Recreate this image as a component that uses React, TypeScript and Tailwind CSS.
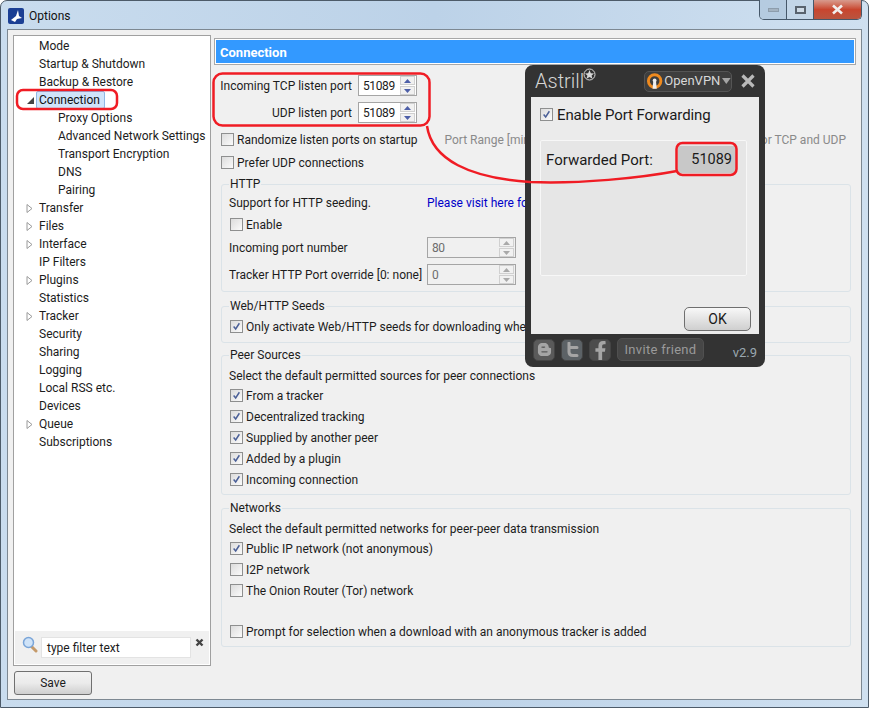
import React from "react";
import { FaBloggerB, FaFacebookF } from "react-icons/fa";

const tree = [
  { label: "Mode" },
  { label: "Startup & Shutdown" },
  { label: "Backup & Restore" },
  { label: "Connection", open: true, selected: true },
  { label: "Proxy Options", child: true },
  { label: "Advanced Network Settings", child: true },
  { label: "Transport Encryption", child: true },
  { label: "DNS", child: true },
  { label: "Pairing", child: true },
  { label: "Transfer", closed: true },
  { label: "Files", closed: true },
  { label: "Interface", closed: true },
  { label: "IP Filters" },
  { label: "Plugins", closed: true },
  { label: "Statistics" },
  { label: "Tracker", closed: true },
  { label: "Security" },
  { label: "Sharing" },
  { label: "Logging" },
  { label: "Local RSS etc." },
  { label: "Devices" },
  { label: "Queue", closed: true },
  { label: "Subscriptions" },
];

function Check({ on }: { on?: boolean }) {
  return (
    <span className="w-[13px] h-[13px] shrink-0 border border-[#8e8f8f] bg-gradient-to-br from-[#dcdcdc] to-[#fbfbfb] p-px flex items-center justify-center">
      {on && (
        <svg width="11" height="11" viewBox="0 0 11 11">
          <path d="M2 5.5 L4.5 8.5 L9 1.5" fill="none" stroke="#4a5f97" strokeWidth="1.8" />
        </svg>
      )}
    </span>
  );
}

function CheckRow({ label, on, className }: { label: string; on?: boolean; className?: string }) {
  return (
    <div className={"h-[21px] flex items-center gap-[3px] whitespace-nowrap " + (className ?? "")}>
      <Check on={on} />
      <span>{label}</span>
    </div>
  );
}

function Spinner({ value, disabled, width }: { value: string; disabled?: boolean; width: string }) {
  const arrow = disabled ? "#a9a9a9" : "#4d5fa8";
  return (
    <div className={"h-[21px] border border-[#a5a5a5] flex items-center " + width + (disabled ? " bg-[#f0f0f0] text-[#6d6d6d]" : " bg-white")}>
      <span className="flex-1 pl-[4px] tracking-[-0.4px]">{value}</span>
      <div className="w-[15px] h-[19px] mr-px flex flex-col gap-px">
        {[0, 1].map((i) => (
          <span key={i} className="flex-1 border border-[#d0d0d0] bg-[#f1f1f1] flex items-center justify-center">
            <svg width="7" height="4" viewBox="0 0 7 4">
              <path d={i === 0 ? "M3.5 0 L7 4 L0 4 Z" : "M0 0 L7 0 L3.5 4 Z"} fill={arrow} />
            </svg>
          </span>
        ))}
      </div>
    </div>
  );
}

function Group({ title, className, children }: { title: string; className?: string; children: React.ReactNode }) {
  return (
    <fieldset className={"border border-[#dbe3e8] rounded-[3px] pl-[7px] ml-[7px] mr-[5px] " + (className ?? "")}>
      <legend className="px-px h-[16px] leading-[17px]">{title}</legend>
      {children}
    </fieldset>
  );
}

function Astrill() {
  return (
    <div className="absolute left-[525px] top-[65px] w-[240px] h-[302px] bg-[#333333] rounded-[8px] flex flex-col px-[6px]">
      <div className="h-[32px] flex items-center shrink-0">
        <span className="w-[52px] text-[20px] text-[#d5d5d5] pl-[4px] font-light">Astrill</span>
        <svg className="mb-[14px]" width="13" height="13" viewBox="0 0 13 13">
          <circle cx="6.5" cy="6.5" r="5.5" fill="none" stroke="#d8d8d8" />
          <path d="M6.5 2 L7.8 5.2 L11 5.5 L8.6 7.6 L9.4 10.8 L6.5 9.1 L3.6 10.8 L4.4 7.6 L2 5.5 L5.2 5.2 Z" fill="#d8d8d8" />
        </svg>
        <div className="ml-[48px] w-[88px] h-[21px] border border-[#555555] rounded-[5px] bg-[#3e3e3e] flex items-center pl-px gap-px text-[#d8d8d8] text-[13px]">
          <svg width="18" height="18" viewBox="0 0 18 18">
            <circle cx="9" cy="9" r="6.5" fill="none" stroke="#ef8a1e" strokeWidth="3" />
            <path d="M7.5 10 L6.8 17 L11.2 17 L10.5 10 Z" fill="#eeeeee" />
            <circle cx="9" cy="8.5" r="2" fill="#eeeeee" />
          </svg>
          <span>OpenVPN</span>
          <svg width="9" height="6" viewBox="0 0 9 6" className="ml-px">
            <path d="M0 0 L9 0 L4.5 6 Z" fill="#a5a5a5" />
          </svg>
        </div>
        <svg className="ml-[9px]" width="14" height="14" viewBox="0 0 14 14">
          <path d="M1.5 1.5 L12.5 12.5 M12.5 1.5 L1.5 12.5" stroke="#b9b9b9" strokeWidth="3.2" />
        </svg>
      </div>
      <div className="h-[237px] shrink-0 bg-[#ebebeb] px-[9px] flex flex-col text-[#1a1a1a]">
        <div className="mt-[11px] h-[13px] flex items-center gap-[4px] text-[15px]">
          <Check on />
          <span className="pt-[2px] tracking-[-0.1px]">Enable Port Forwarding</span>
        </div>
        <div className="mt-[19px] w-[207px] h-[136px] border border-[#f7f7f7] bg-[#e6e6e6] rounded-[2px] pl-[5px] pr-[10px] pt-[5px] flex justify-between">
          <span className="leading-[28px] text-[15px]">Forwarded Port:</span>
          <span className="w-[58px] h-[27px] bg-[#c8c8c8] text-right leading-[27px] pr-[4px] text-[14.5px]">51089</span>
        </div>
        <button className="mt-[31px] self-end -mr-[1px] w-[67px] h-[24px] border border-[#6f6f6f] rounded-[5px] bg-gradient-to-b from-[#f8f8f8] to-[#cfcfcf] text-[14px]">OK</button>
      </div>
      <div className="flex-1 flex items-center gap-[6px] pl-[2px] pb-[2px] text-[#8a8a8a]">
        <span className="w-[22px] h-[22px] rounded-[5px] bg-[#5a5a5a] border border-[#444444] flex items-center justify-center">
          <FaBloggerB size={15} color="#a5a5a5" />
        </span>
        <span className="w-[22px] h-[22px] rounded-[5px] bg-[#5c6266] border border-[#444444] flex items-center justify-center">
          <svg width="14" height="16" viewBox="0 0 14 16">
            <path d="M4 1 L4 10 Q4 13.5 8 13.5 L12 13.5 M4 5.5 L12 5.5" fill="none" stroke="#a5a5a5" strokeWidth="3" strokeLinecap="round" />
          </svg>
        </span>
        <span className="w-[22px] h-[22px] rounded-[5px] bg-[#4d4d4d] border border-[#444444] flex items-end justify-center overflow-hidden">
          <FaFacebookF size={19} color="#a5a5a5" />
        </span>
        <span className="w-[87px] h-[23px] rounded-[5px] bg-[#464646] border border-[#505050] flex items-center justify-center text-[13px] text-[#9a9a9a] tracking-[0.3px]">Invite friend</span>
        <span className="ml-auto pt-[6px] pr-[2px] text-[13px] text-[#9aa7b0]">v2.9</span>
      </div>
    </div>
  );
}

export default function App() {
  return (
    <div className="relative w-[869px] h-[708px] overflow-hidden bg-white text-[12px] text-[#1c1c1c] font-['Roboto',sans-serif]">
      <div className="h-full rounded-t-[7px] border border-[#4d5b69] bg-gradient-to-r from-[#c9dcee] via-[#bcd2e8] to-[#cfe0f0] flex flex-col px-[6px] pb-[7px]">
        {/* Title bar */}
        <div className="h-[28px] shrink-0 flex items-start">
          <svg className="mt-[7px] ml-px" width="16" height="16" viewBox="0 0 16 16">
            <rect width="16" height="16" rx="2" fill="#1b3f94" />
            <path d="M3 12 L8 8 L10 2 L11 8 L14 10 L9 11 L7 14 Z" fill="#ffffff" />
          </svg>
          <span className="ml-[5px] mt-[6px] text-[#111111] text-[12px]">Options</span>
          <div className="ml-auto -mt-px h-[20px] w-[103px] flex border border-t-0 border-[#46586a] rounded-b-[5px] overflow-hidden">
            <span className="w-[27px] border-r border-[#46586a] bg-[#b5cbe0] flex items-center justify-center">
              <span className="w-[11px] h-[4px] bg-[#a4b3c1] border border-[#8d9dac]" />
            </span>
            <span className="w-[27px] border-r border-[#46586a] bg-[#c3d6e8] flex items-center justify-center">
              <span className="w-[11px] h-[8px] border-2 border-[#59636e] bg-[#cfdbe6]" />
            </span>
            <span className="flex-1 bg-gradient-to-b from-[#d79a8d] via-[#c8452e] to-[#b9543f] flex items-center justify-center">
              <svg width="13" height="11" viewBox="0 0 13 11">
                <path d="M2 1.5 L11 9.5 M11 1.5 L2 9.5" stroke="#f1eeee" strokeWidth="2.6" />
              </svg>
            </span>
          </div>
        </div>

        {/* Client area */}
        <div className="flex-1 bg-[#f0f0f0] border border-[#7d8892] p-[5px] pb-0 flex flex-col">
          <div className="flex gap-[3px] h-[631px]">
            {/* Left tree */}
            <div className="w-[198px] shrink-0 border border-[#a0a0a0] bg-white flex flex-col">
              <div className="flex-1 pt-px">
                {tree.map((t) => (
                  <div key={t.label} className={"h-[18px] flex items-center whitespace-nowrap " + (t.child ? "pl-[44px]" : "pl-[25px]")}>
                    {t.open && (
                      <svg className="absolute left-[27px]" width="7" height="7" viewBox="0 0 7 7">
                        <path d="M7 0 L7 7 L0 7 Z" fill="#444444" />
                      </svg>
                    )}
                    {t.closed && (
                      <svg className="absolute left-[26px]" width="7" height="9" viewBox="0 0 7 9">
                        <path d="M1 .5 L6 4.5 L1 8.5 Z" fill="#ffffff" stroke="#9a9a9a" />
                      </svg>
                    )}
                    <span className={t.selected ? "bg-[#cfe4fa] border border-[#8eb8e6] rounded-[2px] h-[18px] leading-[16px] pl-[2px] pr-[4px] -ml-[3px] text-[#111111]" : ""}>{t.label}</span>
                  </div>
                ))}
              </div>
              <div className="h-[33px] bg-[#f0f0f0] flex items-start pl-[7px] pt-[6px] mx-px mb-px">
                <svg width="16" height="17" viewBox="0 0 16 17" className="-mt-[1px]">
                  <line x1="9.5" y1="10.5" x2="14" y2="15" stroke="#c59a6a" strokeWidth="3" strokeLinecap="round" />
                  <circle cx="6.5" cy="6.5" r="5" fill="#cfe3f8" stroke="#7aa5d8" strokeWidth="1.5" />
                </svg>
                <span className="ml-[3px] w-[150px] h-[21px] bg-white border border-[#e3e3e3] leading-[21px] pl-[5px]">type filter text</span>
                <svg className="ml-[4px] mt-[1px]" width="9" height="9" viewBox="0 0 9 9">
                  <path d="M1.5 1.5 L7.5 7.5 M7.5 1.5 L1.5 7.5" stroke="#444444" strokeWidth="2.4" />
                </svg>
              </div>
            </div>

            {/* Right page */}
            <div className="flex-1 flex flex-col">
              <div className="h-[27px] mt-[3px] border border-[#a8a8a8] bg-white p-px">
                <div className="h-full bg-[#3399ff] text-white font-bold text-[13px] leading-[25px] pl-[4px]">Connection</div>
              </div>

              <div className="mt-[10px] flex items-center whitespace-nowrap">
                <span className="w-[138px] text-right">Incoming TCP listen port</span>
                <Spinner value="51089" width="w-[59px] ml-[6px]" />
              </div>
              <div className="mt-[6px] flex items-center">
                <span className="w-[138px] text-right">UDP listen port</span>
                <Spinner value="51089" width="w-[59px] ml-[6px]" />
              </div>

              <div className="mt-[6px] flex items-center h-[21px] pl-[7px] whitespace-nowrap">
                <CheckRow label="Randomize listen ports on startup" />
                <span className="ml-[27px] text-[#8a8a8a]">Port Range [min</span>
                <span className="ml-auto mr-[10px] text-[#8a8a8a]">or TCP and UDP</span>
              </div>
              <div className="mt-[2px] pl-[7px]">
                <CheckRow label="Prefer UDP connections" />
              </div>

              <Group title="HTTP" className="mt-[3px] h-[116px]">
                <div className="flex h-[20px] items-center mt-px whitespace-nowrap">
                  <span className="w-[198px]">Support for HTTP seeding.</span>
                  <span className="text-[#0000c8]">Please visit here for more info</span>
                </div>
                <CheckRow label="Enable" className="mt-[1px] pl-px" />
                <div className="mt-[2px] h-[21px] flex items-center whitespace-nowrap">
                  <span className="w-[198px]">Incoming port number</span>
                  <Spinner value="80" disabled width="w-[89px]" />
                </div>
                <div className="mt-[6px] h-[21px] flex items-center whitespace-nowrap">
                  <span className="w-[198px]">Tracker HTTP Port override [0: none]</span>
                  <Spinner value="0" disabled width="w-[89px]" />
                </div>
              </Group>

              <Group title="Web/HTTP Seeds" className="mt-[6px] h-[45px]">
                <CheckRow label="Only activate Web/HTTP seeds for downloading when needed" on className="mt-[2px] pl-px" />
              </Group>

              <Group title="Peer Sources" className="mt-[4px] h-[148px]">
                <div className="h-[19px] mt-[3px] flex items-center">Select the default permitted sources for peer connections</div>
                <CheckRow label="From a tracker" on className="pl-px" />
                <CheckRow label="Decentralized tracking" on className="pl-px" />
                <CheckRow label="Supplied by another peer" on className="pl-px" />
                <CheckRow label="Added by a plugin" on className="pl-px" />
                <CheckRow label="Incoming connection" on className="pl-px" />
              </Group>

              <Group title="Networks" className="mt-[5px] h-[147px]">
                <div className="h-[19px] mt-[3px] flex items-center">Select the default permitted networks for peer-peer data transmission</div>
                <CheckRow label="Public IP network (not anonymous)" on className="pl-px" />
                <CheckRow label="I2P network" className="pl-px" />
                <CheckRow label="The Onion Router (Tor) network" className="pl-px" />
                <CheckRow label="Prompt for selection when a download with an anonymous tracker is added" className="mt-[20px] pl-px" />
              </Group>
            </div>
          </div>
          <button className="mt-[5px] ml-px w-[78px] h-[24px] border border-[#707070] rounded-[3px] bg-gradient-to-b from-[#f2f2f2] via-[#ebebeb] to-[#cfcfcf] text-[12px]">Save</button>
        </div>
      </div>

      <Astrill />

      {/* Red annotations drawn on the screenshot */}
      <svg className="absolute inset-0 pointer-events-none" width="869" height="708" viewBox="0 0 869 708" fill="none" stroke="#f01c24" strokeWidth="2.5">
        <rect x="17" y="90" width="100" height="19" rx="6" />
        <rect x="213.5" y="73.5" width="216" height="52" rx="9" />
        <rect x="676.5" y="143" width="60" height="32" rx="6" />
        <path d="M427 126 C 432 160, 470 178, 530 182 C 580 184, 640 178, 677 171" />
      </svg>
    </div>
  );
}
